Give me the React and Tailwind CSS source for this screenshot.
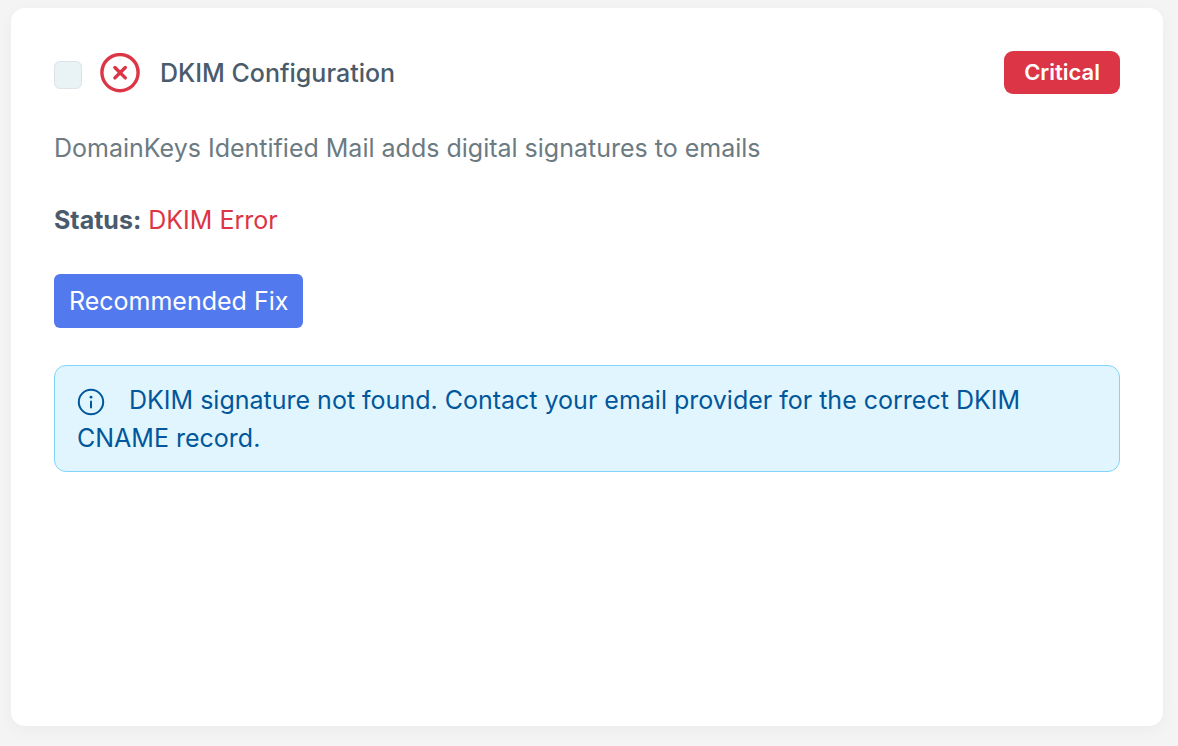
import { useState } from 'react';

function ErrorIcon() {
  return (
    <svg className="size-10 shrink-0" viewBox="0 0 40 40" fill="none" stroke="#dc3545" aria-hidden="true">
      <circle cx="20" cy="19.6" r="18.1" strokeWidth="3.4" />
      <path d="M14.9 14.5l10.4 10.4M25.3 14.5L14.9 24.9" strokeWidth="3.4" strokeLinecap="round" />
    </svg>
  );
}

function InfoIcon() {
  return (
    <svg className="mr-6 inline-block size-7 align-middle" viewBox="0 0 28 28" fill="none" aria-hidden="true">
      <circle cx="14" cy="14" r="12.2" stroke="#01579b" strokeWidth="2" />
      <circle cx="14" cy="9.2" r="1.4" fill="#01579b" />
      <path d="M14 13.4v6" stroke="#01579b" strokeWidth="2" strokeLinecap="round" />
    </svg>
  );
}

function App() {
  const [selected, setSelected] = useState(false);

  return (
    <div className="flex min-h-screen bg-[#f4f4f4] pt-2 pr-[15px] pb-5 pl-[11px] font-['Inter',sans-serif] text-[25px] leading-[38px]">
      <section className="flex-1 rounded-[14px] bg-white p-[43px] shadow-[0_4px_16px_rgba(0,0,0,0.04)]">
        <div className="flex items-center justify-between">
          <div className="flex items-center">
            <input
              type="checkbox"
              aria-label="Select DKIM Configuration"
              checked={selected}
              onChange={(e) => setSelected(e.target.checked)}
              className="mt-1 mr-[18px] size-7 appearance-none rounded-md border border-[#dee2e6] bg-[#e9f2f5] checked:bg-[#527aee]"
            />
            <ErrorIcon />
            <h2 className="ml-5 font-medium text-[#4a5b6c]">DKIM Configuration</h2>
          </div>
          <span className="rounded-[9px] bg-[#dc3545] px-5 text-[22px] leading-[43px] font-semibold text-white">Critical</span>
        </div>
        <p className="mt-[35px] text-[#6c7a82]">DomainKeys Identified Mail adds digital signatures to emails</p>
        <p className="mt-[34px] text-[#dc3545]">
          <strong className="font-bold text-[#4a5b6c]">Status:</strong> DKIM Error
        </p>
        <button type="button" className="mt-[35px] rounded-md bg-[#527aee] px-[15px] py-2 text-white">
          Recommended Fix
        </button>
        <div className="mt-[37px] rounded-xl border border-[#81d4fa] bg-[#e1f5fe] px-[22px] pt-[15px] pb-[14px] text-[#01579b]">
          <InfoIcon />
          DKIM signature not found. Contact your email provider for the correct DKIM CNAME record.
        </div>
      </section>
    </div>
  );
}

export default App;
